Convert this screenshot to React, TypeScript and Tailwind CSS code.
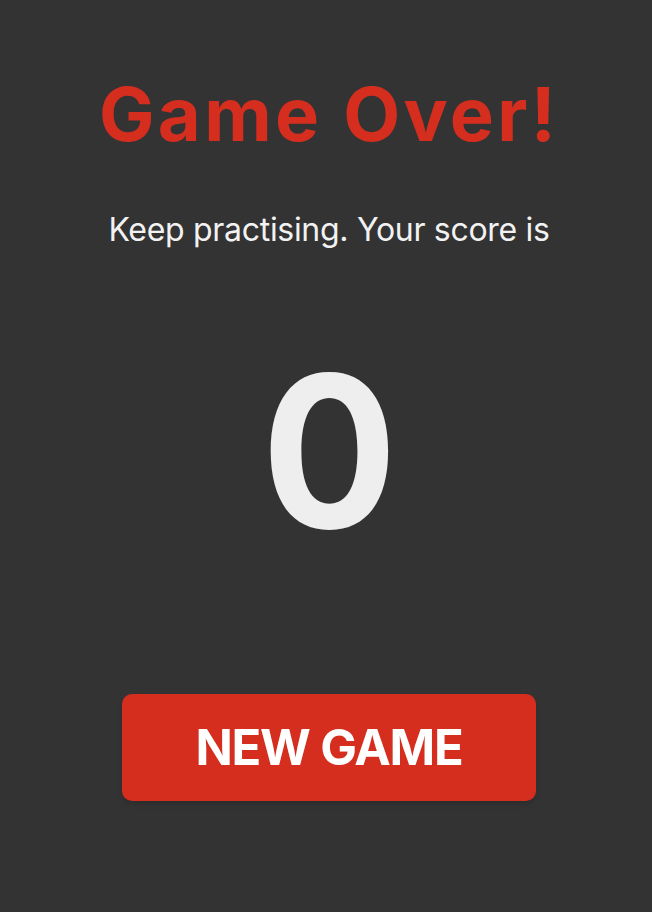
import React from 'react';

const App = () => {
  return (
    <div
      className="min-h-[912px] w-full bg-[#333333] flex flex-col items-center pt-[77px] pl-[6px]"
      style={{ fontFamily: 'Inter, "Liberation Sans", sans-serif' }}
    >
      <h1 className="text-[74px] leading-none font-bold text-[#d52e1f] tracking-[3.3px]">
        Game Over!
      </h1>
      <p className="mt-[63px] text-[32px] leading-none text-[#f2f2f2] tracking-[-0.3px]">
        Keep practising. Your score is
      </p>
      <div className="mt-[99px] text-[212px] leading-none font-bold text-[#eeeeee] scale-x-95">0</div>
      <button className="mt-[137px] w-[414px] h-[107px] rounded-[10px] bg-[#d52e1f] text-white text-[49px] font-bold leading-none tracking-[-1.2px] shadow-md">
        NEW GAME
      </button>
    </div>
  );
};

export default App;
